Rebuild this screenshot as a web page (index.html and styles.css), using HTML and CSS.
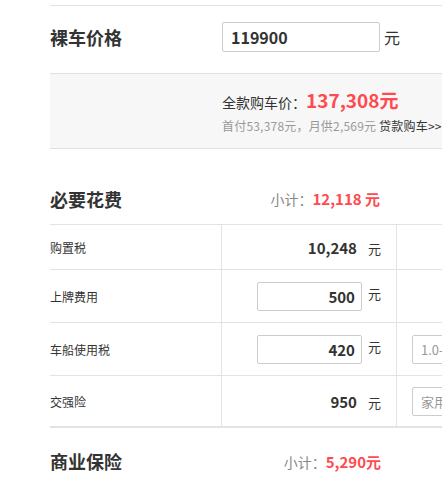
FILE: index.html
```html
<!DOCTYPE html>
<html lang="zh-CN">
<head>
  <meta charset="UTF-8">
  <title>购车计算器</title>
  <link rel="stylesheet" href="styles.css">
</head>
<body>
<div class="calc">

  <!-- 裸车价格 -->
  <div class="price-row">
    <h2 class="title">裸车价格</h2>
    <div class="price-input">
      <input type="text" value="119900">
      <span class="unit">元</span>
    </div>
  </div>

  <div class="summary">
    <p class="total">全款购车价：<em>137,308元</em></p>
    <p class="loan">首付53,378元，月供2,569元 <a href="#">贷款购车&gt;&gt;</a></p>
  </div>

  <!-- 必要花费 -->
  <div class="section-head">
    <h2 class="title">必要花费</h2>
    <span class="subtotal">小计：<em>12,118 元</em></span>
  </div>
  <table class="fee-table">
    <tr class="short">
      <td class="name">购置税</td>
      <td class="val"><b>10,248</b><span>元</span></td>
      <td class="extra"></td>
    </tr>
    <tr>
      <td class="name">上牌费用</td>
      <td class="val"><input type="text" value="500"><span>元</span></td>
      <td class="extra"></td>
    </tr>
    <tr>
      <td class="name">车船使用税</td>
      <td class="val"><input type="text" value="420"><span>元</span></td>
      <td class="extra"><div class="select">1.0-1.6L(含)</div></td>
    </tr>
    <tr class="last">
      <td class="name">交强险</td>
      <td class="val"><b>950</b><span>元</span></td>
      <td class="extra"><div class="select">家用6座以下</div></td>
    </tr>
  </table>

  <!-- 商业保险 -->
  <div class="section-head">
    <h2 class="title">商业保险</h2>
    <span class="subtotal">小计：<em>5,290元</em></span>
  </div>

</div>
</body>
</html>
```
FILE: styles.css
```css
body {
  margin: 0;
  overflow: hidden;
  background: #fff;
  font-family: "Noto Sans CJK SC", "Open Sans", sans-serif;
  color: #333;
}
.calc {
  width: 600px;
  margin-left: 50px;
  padding-top: 5px;
}
.title {
  margin: 0;
  font-size: 18px;
  font-weight: bold;
  color: #333;
  line-height: 24px;
}
em {
  font-style: normal;
  font-weight: bold;
  color: #ff4a4f;
}
.price-row {
  display: flex;
  align-items: center;
  box-sizing: border-box;
  height: 68px;
  padding-bottom: 6px;
  border-top: 1px solid #e3e3e3;
}
.price-row .title {
  width: 172px;
}
.price-input {
  display: flex;
  align-items: center;
  gap: 4px;
}
.price-input input {
  box-sizing: border-box;
  width: 158px;
  height: 30px;
  padding: 0 8px;
  border: 1px solid #ccc;
  border-radius: 2px;
  font-family: inherit;
  font-size: 16px;
  font-weight: bold;
  color: #333;
}
.price-input .unit {
  font-size: 16px;
}
.summary {
  height: 76px;
  box-sizing: border-box;
  padding: 12px 0 0 172px;
  background: #f7f7f7;
  border-top: 1px solid #e0e0e0;
  border-bottom: 1px solid #e0e0e0;
}
.summary p {
  margin: 0;
  white-space: nowrap;
}
.total {
  font-size: 14px;
  line-height: 28px;
}
.total em {
  font-size: 19px;
}
.loan {
  font-size: 12px;
  line-height: 20px;
  color: #999;
  letter-spacing: 0.2px;
}
.loan a {
  color: #333;
  text-decoration: none;
}
.section-head {
  display: flex;
  align-items: center;
  width: 330px;
  justify-content: space-between;
  height: 75px;
}
.fee-table + .section-head {
  height: 66px;
  width: 331px;
}
.section-head .title {
  padding-top: 24px;
}
.fee-table + .section-head .title,
.fee-table + .section-head .subtotal {
  padding-top: 0;
}
.subtotal {
  padding-top: 24px;
  font-size: 14px;
  color: #888;
}
.subtotal em {
  font-size: 15px;
}
.fee-table {
  border-collapse: collapse;
  font-size: 12px;
}
.fee-table td {
  height: 52px;
  padding: 0;
  border-top: 1px solid #e3e3e3;
}
.fee-table tr.short td {
  height: 44px;
}
.fee-table tr.last td {
  height: 50px;
  border-bottom: 2px solid #e3e3e3;
}
.fee-table .name {
  width: 171px;
  border-right: 1px solid #e3e3e3;
}
.fee-table .val {
  width: 159px;
  padding-right: 15px;
  text-align: right;
  border-right: 1px solid #e3e3e3;
}
.fee-table .val b {
  font-size: 15px;
}
.fee-table .val span {
  display: inline-block;
  margin-left: 11px;
  font-size: 13px;
}
.fee-table .val input {
  box-sizing: border-box;
  width: 105px;
  height: 29px;
  padding: 0 6px;
  border: 1px solid #ccc;
  border-radius: 2px;
  text-align: right;
  font-family: inherit;
  font-size: 15px;
  font-weight: bold;
  color: #333;
  vertical-align: middle;
}
.fee-table .val input + span {
  margin-left: 6px;
}
.fee-table .extra {
  width: 200px;
  padding-left: 15px;
}
.select {
  box-sizing: border-box;
  width: 150px;
  height: 29px;
  padding: 0 8px;
  border: 1px solid #ccc;
  border-radius: 2px;
  line-height: 27px;
  font-size: 13px;
  color: #999;
  white-space: nowrap;
  overflow: hidden;
}
```
